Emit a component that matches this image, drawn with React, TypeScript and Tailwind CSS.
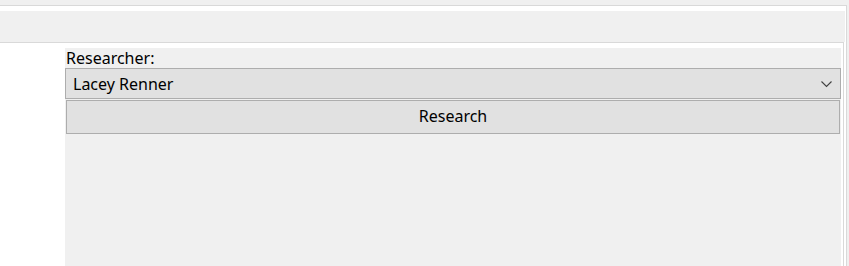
export default function App() {
  return (
    <div
      className="w-[849px] h-[266px] overflow-hidden bg-[#f0f0f0] pt-[5px]"
      style={{ fontFamily: '"Noto Sans", "Open Sans", sans-serif' }}
    >
      <div className="w-[847px] h-[261px] bg-white border-t border-r border-[#d9d9d9] flex flex-col">
        <div className="pt-[5px] pr-[1px]">
          <div className="h-[31px] bg-[#f0f0f0]" />
        </div>
        <div className="flex-1 mr-[2px] border-t border-r border-[#d9d9d9] pt-[5px] pl-[65px] pr-[2px] flex">
          <div className="flex-1 bg-[#f0f0f0] flex flex-col">
            <div className="h-[20px] text-[16px] leading-[20px] text-black pl-[1px]">Researcher:</div>
            <div className="h-[31px] bg-[#e1e1e1] border border-[#adadad] flex items-center justify-between pl-[7px] pr-[8px]">
              <span className="text-[16px] leading-[20px] text-black mt-[1px]">Lacey Renner</span>
              <svg width="11" height="7" viewBox="0 0 11 7" className="mt-[1px]">
                <path d="M0.5 0.5 L5.5 5.5 L10.5 0.5" fill="none" stroke="#404040" strokeWidth="1.1" />
              </svg>
            </div>
            <div className="mx-[1px] mt-[1px] h-[34px] bg-[#e1e1e1] border border-[#adadad] flex items-center justify-center">
              <span className="text-[16px] leading-[20px] text-black -mt-[2px]">Research</span>
            </div>
          </div>
        </div>
      </div>
    </div>
  );
}
